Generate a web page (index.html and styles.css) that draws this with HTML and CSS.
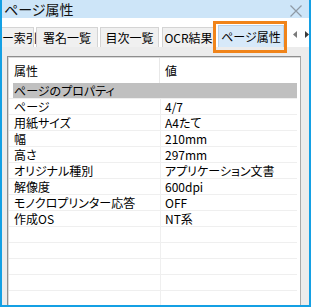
FILE: index.html
```html
<!DOCTYPE html>
<html lang="ja">
<head>
<meta charset="utf-8">
<link rel="stylesheet" href="styles.css">
</head>
<body>
<div class="win">
  <div class="title">
    <span class="title-text">ページ属性</span>
    <svg class="close" width="12" height="12" viewBox="0 0 12 12"><path d="M0.5 0.5 L11.5 11.5 M11.5 0.5 L0.5 11.5" stroke="#8f9aa5" stroke-width="1.2" fill="none"/></svg>
  </div>
  <div class="tabbar">
    <div class="tabs">
      <div class="tab t1">ー索引</div>
      <div class="tab t2">署名一覧</div>
      <div class="tab t3">目次一覧</div>
      <div class="tab t4">OCR結果</div>
      <div class="tab t5 sel">ページ属性</div>
    </div>
    <div class="arrows">
      <svg width="4" height="7" viewBox="0 0 4 7"><path d="M4 0 L0 3.5 L4 7 Z" fill="#7a7a7a"/></svg>
      <svg width="4" height="7" viewBox="0 0 4 7"><path d="M0 0 L4 3.5 L0 7 Z" fill="#3a3a3a"/></svg>
    </div>
  </div>
  <div class="body">
    <div class="list">
      <div class="hdr"><div class="c1">属性</div><div class="c2">値</div></div>
      <div class="row group"><div class="c1">ページのプロパティ</div><div class="c2"></div></div>
      <div class="row"><div class="c1">ページ</div><div class="c2">4/7</div></div>
      <div class="row"><div class="c1">用紙サイズ</div><div class="c2">A4たて</div></div>
      <div class="row"><div class="c1">幅</div><div class="c2">210mm</div></div>
      <div class="row"><div class="c1">高さ</div><div class="c2">297mm</div></div>
      <div class="row"><div class="c1">オリジナル種別</div><div class="c2">アプリケーション文書</div></div>
      <div class="row"><div class="c1">解像度</div><div class="c2">600dpi</div></div>
      <div class="row"><div class="c1">モノクロプリンター応答</div><div class="c2">OFF</div></div>
      <div class="row"><div class="c1">作成OS</div><div class="c2">NT系</div></div>
      <div class="row"><div class="c1"></div><div class="c2"></div></div>
      <div class="row"><div class="c1"></div><div class="c2"></div></div>
      <div class="row"><div class="c1"></div><div class="c2"></div></div>
      <div class="row"><div class="c1"></div><div class="c2"></div></div>
      <div class="row"><div class="c1"></div><div class="c2"></div></div>
    </div>
  </div>
  <div class="hl"></div>
</div>
</body>
</html>
```
FILE: styles.css
```css
* { box-sizing: border-box; }
html, body { margin: 0; padding: 0; background: #fff; }
body {
  font-family: "Noto Sans CJK JP", "Noto Sans", sans-serif;
  font-size: 12px;
  color: #000;
}
.win {
  position: relative;
  width: 311px;
  height: 307px;
  border: 2px solid #14a0e4;
  border-top: none;
  overflow: hidden;
  display: flex;
  flex-direction: column;
  background: #ececec;
}
.title {
  height: 18px;
  flex: none;
  background: #cde5f8;
  display: flex;
  align-items: center;
  justify-content: space-between;
  padding: 0 7px 0 2px;
}
.title-text {
  font-size: 14px;
  line-height: 18px;
  font-feature-settings: "palt";
  color: #111;
}
.close { margin-top: 4px; }
.tabbar {
  height: 29px;
  flex: none;
  background: #fff;
  display: flex;
  align-items: flex-end;
  overflow: hidden;
}
.tabs {
  display: flex;
  align-items: flex-end;
}
.tab {
  height: 20px;
  border: 1px solid #d4d4d4;
  border-bottom: none;
  background: #f0f0f0;
  text-align: center;
  line-height: 19px;
  font-size: 12px;
  font-feature-settings: "palt";
  margin-right: 2px;
  white-space: nowrap;
}
.t1 { width: 32px; border-left: none; text-align: right; padding-right: 3px; }
.t2 { width: 62px; }
.t3 { width: 59px; margin-right: 3px; }
.t4 { width: 53px; margin-right: 3px; }
.t5 { width: 66px; }
.sel {
  height: 22px;
  background: #d7e9f9;
  border-color: #b8d3ec;
  line-height: 22px;
}
.arrows {
  display: flex;
  gap: 8px;
  margin-left: 7px;
  padding-bottom: 9px;
}
.body {
  flex: 1;
  padding: 9px 8px 0 5px;
  background: #ececec;
  overflow: hidden;
}
.list {
  height: 300px;
  background: #fff;
  border: 1px solid #8e8e8e;
  border-right-color: #a8a8a8;
  box-shadow: inset 1px 1px 0 #d9d9d9;
  padding-top: 1px;
}
.hdr {
  height: 25px;
  display: flex;
  align-items: center;
}
.hdr .c1 {
  width: 152px;
  padding-left: 6px;
  height: 25px;
  line-height: 25px;
  border-right: 1px solid #e8e8e8;
}
.hdr .c2 { padding-left: 5px; line-height: 25px; }
.row {
  height: 16px;
  display: flex;
  margin-left: 1px;
  width: 288px;
  border-bottom: 1px solid #efefef;
  line-height: 15px;
  font-feature-settings: "palt";
}
.row .c1 { width: 151px; padding-left: 5px; white-space: nowrap; }
.row .c2 { flex: 1; padding-left: 4px; border-left: 1px solid #efefef; white-space: nowrap; }
.group {
  background: linear-gradient(to right, #fff 0, #fff 4px, #c0c0c0 4px);
}
.group .c2 { border-left-color: #c0c0c0; }
.hl {
  position: absolute;
  left: 211px;
  top: 21px;
  width: 74px;
  height: 32px;
  border: 3px solid #f0841a;
}
```
